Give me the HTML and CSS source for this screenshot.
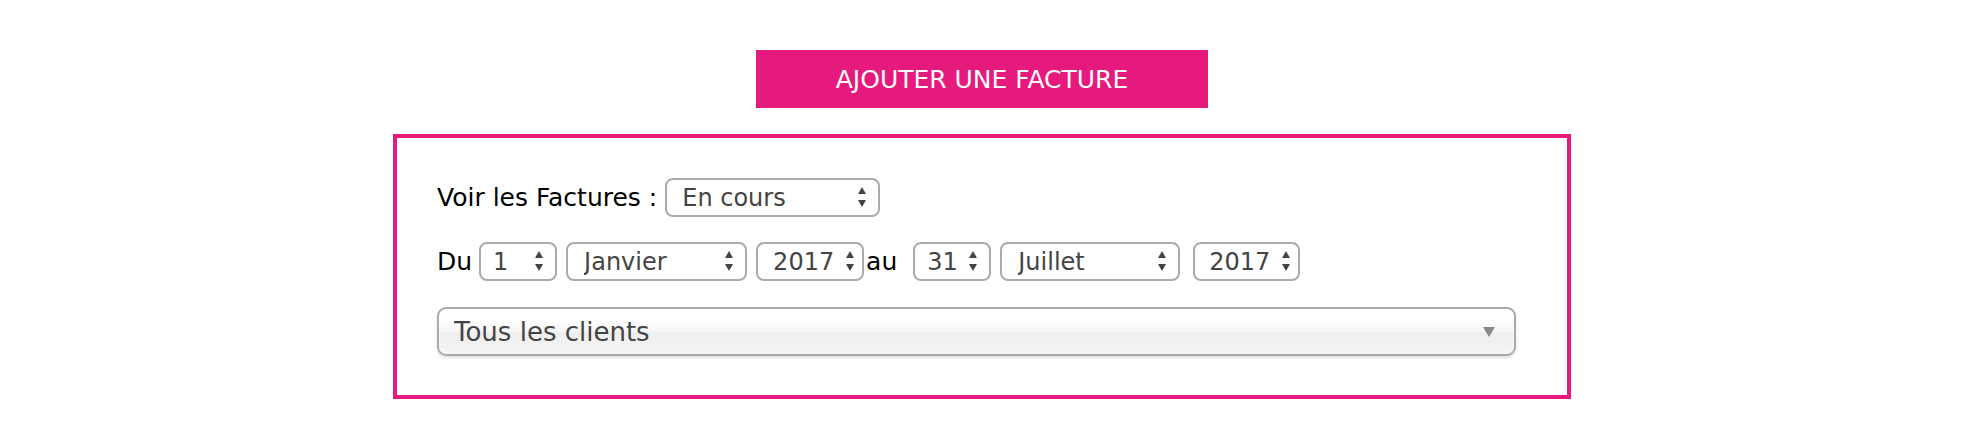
FILE: index.html
```html
<!DOCTYPE html>
<html lang="fr">
<head>
    <meta charset="UTF-8">
    <meta name="viewport" content="width=device-width, initial-scale=1.0">
    <title>Factures</title>
    <link rel="stylesheet" href="styles.css">
</head>
<body>
<button class="btn-ajouter" type="button">Ajouter une facture</button>

<div class="filtres">
    <div class="ligne">
        <label for="etat">Voir les Factures :</label>
        <span class="pick pick-etat">
            <select id="etat">
                <option>En cours</option>
                <option>Payées</option>
                <option>Toutes</option>
            </select>
        </span>
    </div>
    <div class="ligne ligne-dates">
        <span>Du</span>
        <span class="pick pick-jour m-du">
            <select id="jourDebut"><option>1</option></select>
        </span>
        <span class="pick pick-mois">
            <select id="moisDebut"><option>Janvier</option></select>
        </span>
        <span class="pick pick-annee">
            <select id="anneeDebut"><option>2017</option></select>
        </span>
        <span class="au">au</span>
        <span class="pick pick-jour m-au">
            <select id="jourFin"><option>31</option></select>
        </span>
        <span class="pick pick-mois2">
            <select id="moisFin"><option>Juillet</option></select>
        </span>
        <span class="pick pick-annee2">
            <select id="anneeFin"><option>2017</option></select>
        </span>
    </div>
    <div class="clients">
        <select id="client">
            <option>Tous les clients</option>
        </select>
    </div>
</div>
</body>
</html>
```

FILE: styles.css
```css
body {
    font-family: "DejaVu Sans", Verdana, sans-serif;
    margin: 0;
    padding: 0;
    background-color: #fff;
}

.btn-ajouter {
    display: block;
    width: 452px;
    height: 58px;
    margin: 50px auto 0;
    padding: 0;
    border: none;
    background-color: #e6197c;
    color: #fff;
    font-family: "DejaVu Sans", Verdana, sans-serif;
    font-size: 25px;
    text-transform: uppercase;
    cursor: pointer;
}

.filtres {
    box-sizing: border-box;
    width: 1178px;
    margin: 26px auto 0;
    padding: 40px 40px 39px;
    border: 4px solid #e6197c;
}

.ligne {
    display: flex;
    align-items: center;
    height: 39px;
    font-size: 25px;
    color: #000;
}

.ligne-dates {
    margin-top: 25px;
}

.pick {
    position: relative;
    display: inline-flex;
    margin-left: 9px;
}

/* petites flèches haut / bas */
.pick::before,
.pick::after {
    content: "";
    position: absolute;
    right: 14px;
    width: 0;
    height: 0;
    border-left: 4px solid transparent;
    border-right: 4px solid transparent;
    pointer-events: none;
}

.pick::before {
    top: 9px;
    border-bottom: 7px solid #444;
}

.pick::after {
    top: 22px;
    border-top: 7px solid #444;
}

.pick select {
    appearance: none;
    -webkit-appearance: none;
    box-sizing: border-box;
    height: 39px;
    padding: 0 24px 0 12px;
    border: 2px solid #aaa;
    border-radius: 8px;
    background-color: #fff;
    color: #444;
    font-family: "DejaVu Sans", Verdana, sans-serif;
    font-size: 24px;
}

.pick-etat { margin-left: 8px; }
.pick-etat select { width: 215px; padding-left: 15px; }

.m-du { margin-left: 7px; }
.pick-jour select { width: 78px; }
.pick-mois select { width: 181px; padding-left: 16px; }
.pick-annee select { width: 108px; padding-left: 15px; }
.pick-annee::before, .pick-annee::after { right: 10px; }

.au {
    margin-left: 2px;
}

.m-au { margin-left: 16px; }
.pick-mois2 select { width: 180px; padding-left: 16px; }
.pick-annee2 { margin-left: 13px; }
.pick-annee2 select { width: 107px; padding-left: 14px; }
.pick-annee2::before, .pick-annee2::after { right: 10px; }

.clients {
    position: relative;
    margin-top: 26px;
    width: 1079px;
}

.clients select {
    appearance: none;
    -webkit-appearance: none;
    box-sizing: border-box;
    width: 100%;
    height: 49px;
    padding: 0 40px 0 15px;
    border: 2px solid #aaa;
    border-radius: 9px;
    background: linear-gradient(#fff 20%, #f6f6f6 50%, #eee 52%, #f4f4f4 100%);
    box-shadow: 0 0 3px #fff inset, 0 2px 3px rgba(0, 0, 0, 0.12);
    color: #444;
    font-family: "DejaVu Sans", Verdana, sans-serif;
    font-size: 26px;
}

.clients::after {
    content: "";
    position: absolute;
    right: 21px;
    top: 20px;
    width: 0;
    height: 0;
    border-left: 6px solid transparent;
    border-right: 6px solid transparent;
    border-top: 10px solid #888;
    pointer-events: none;
}
```
